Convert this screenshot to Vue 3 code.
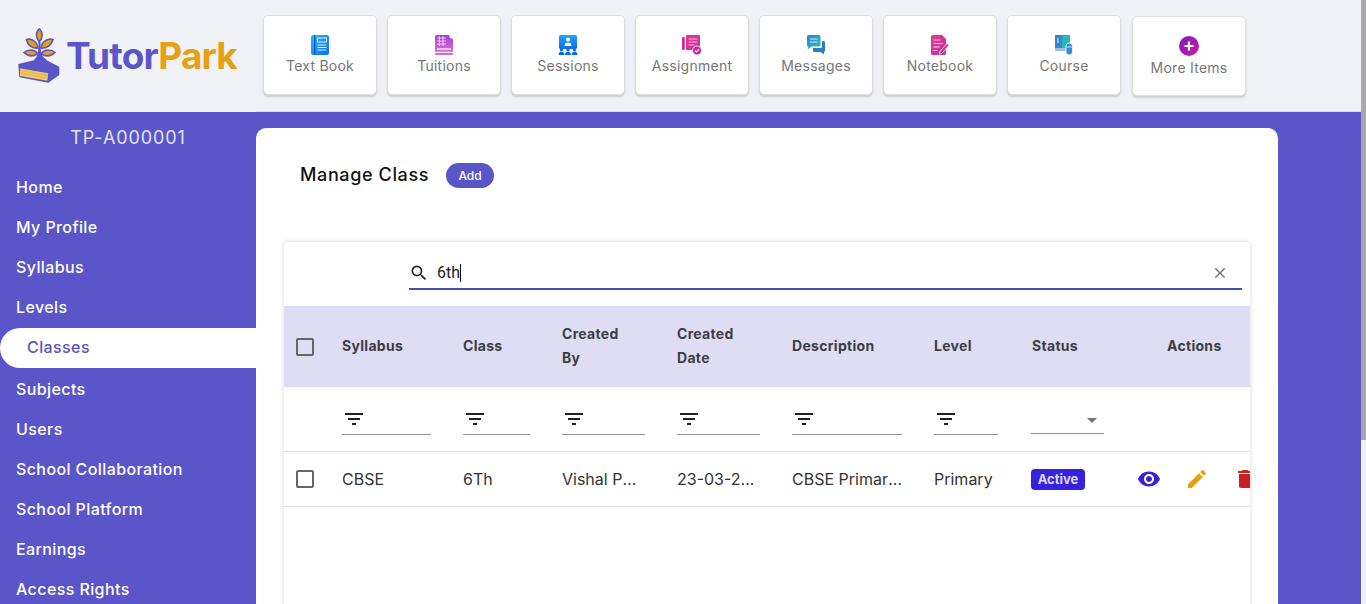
<script setup>
const navCards = [
  { label: 'Text Book', icon: 'book' },
  { label: 'Tuitions', icon: 'tuition' },
  { label: 'Sessions', icon: 'session' },
  { label: 'Assignment', icon: 'assign' },
  { label: 'Messages', icon: 'message' },
  { label: 'Notebook', icon: 'note' },
  { label: 'Course', icon: 'course' },
  { label: 'More Items', icon: 'more' }
];

const menu = ['Home', 'My Profile', 'Syllabus', 'Levels', 'Classes', 'Subjects', 'Users', 'School Collaboration', 'School Platform', 'Earnings', 'Access Rights'];

const columns = [
  { title: 'Syllabus', filter: 89, cell: 89, value: 'CBSE' },
  { title: 'Class', filter: 67, cell: 67, value: '6Th' },
  { title: 'Created By', filter: 83, cell: 83, value: 'Vishal Patel' },
  { title: 'Created Date', filter: 83, cell: 83, value: '23-03-2022' },
  { title: 'Description', filter: 110, cell: 112, value: 'CBSE Primary Class' },
  { title: 'Level', filter: 64, cell: 70, value: 'Primary' }
];
</script>

<template>
  <div class="page">
    <div class="content">
      <header class="topbar">
        <div class="logo">
          <svg class="logo-mark" width="42" height="56" viewBox="0 0 42 56">
            <g fill="#e8a013" stroke="#5a55c9" stroke-width="1.6">
              <path d="M21.3 .8C25 4 25 10 21.3 14 17.5 10 17.5 4 21.3 .8Z" />
              <path d="M8.5 11.5C13 10 19 13 20 20 14 21 9.5 17 8.5 11.5Z" />
              <path d="M35 11.5C30 10 24 13 23 20 29 21 33.5 17 35 11.5Z" />
              <path d="M6 24.5C10 21 16 21 20 25.5 15 29 10 28.5 6 24.5Z" />
              <path d="M37 24.5C33 21 27 21 23 25.5 28 29 33 28.5 37 24.5Z" />
            </g>
            <path fill="#5a55c9" d="M16 32C20 28 20.5 24 20.5 14h2C22.500 24 23 28 29 32Z" />
            <path fill="#5a55c9" d="M.3 36 19 31.500h8L41.300 38.700V47L30.300 54.700 1.300 49.300Z" />
            <path fill="#f0c866" d="M2 40.300 30.300 45.300 29.300 52.700 2 48Z" />
            <path stroke="#d9a63a" stroke-width=".6" d="M2.500 42.500 30 47.500M2.500 45 29.500 50" />
          </svg>
          <span class="logo-text">Tutor<span class="park">Park</span></span>
        </div>
        <nav class="cards">
          <a v-for="c in navCards" :key="c.label" class="card" :class="{ last: c.icon === 'more' }">
            <svg width="20" height="20" viewBox="0 0 20 20" class="card-icon">
              <defs>
                <linearGradient id="gb" x1="0" y1="0" x2="1" y2="1"><stop offset="0" stop-color="#31b5fb" /><stop offset="1" stop-color="#0b6fe8" /></linearGradient>
                <linearGradient id="gp" x1="0" y1="0" x2="0" y2="1"><stop offset="0" stop-color="#a23ccf" /><stop offset="1" stop-color="#dc70d6" /></linearGradient>
                <linearGradient id="gs" x1="0" y1="0" x2="0" y2="1"><stop offset="0" stop-color="#24a4fb" /><stop offset="1" stop-color="#0a6be6" /></linearGradient>
                <linearGradient id="gm" x1="0" y1="0" x2="1" y2="1"><stop offset="0" stop-color="#f0308a" /><stop offset="1" stop-color="#bd3aa8" /></linearGradient>
                <linearGradient id="gc" x1="0" y1="0" x2="1" y2="1"><stop offset="0" stop-color="#2f7fd0" /><stop offset="1" stop-color="#29c0b4" /></linearGradient>
                <linearGradient id="gr" x1="0" y1="0" x2="1" y2="1"><stop offset="0" stop-color="#7d1cb8" /><stop offset="1" stop-color="#c81da0" /></linearGradient>
              </defs>
              <template v-if="c.icon === 'book'">
                <rect x="1" y="0" width="18" height="20" rx="2" fill="url(#gb)" />
                <rect x="4" y="0" width="1.200" height="20" fill="#0c57c4" />
                <rect x="7.500" y="3" width="9" height="4" fill="none" stroke="#d8f0ff" stroke-width="1" />
                <path d="M7.500 10h9M7.500 12.500h9M7.500 15h9" stroke="#d8f0ff" stroke-width="1.200" />
              </template>
              <template v-else-if="c.icon === 'tuition'">
                <path d="M1 2a2 2 0 0 1 2-2h12l1 3 3 1v13H1Z" fill="url(#gp)" />
                <path d="M3 3h9M3 6h9M3 9h9M5.500 1v10M9 1v10" stroke="#f2d4f5" stroke-width=".9" fill="none" />
                <path d="M3 14h14M3 17.500h14" stroke="#f8e4f8" stroke-width="1.300" />
                <rect x="1" y="18" width="18" height="2" rx="1" fill="#d66ad4" />
              </template>
              <template v-else-if="c.icon === 'session'">
                <rect x="1" y="0" width="18" height="14" rx="1.500" fill="url(#gs)" />
                <circle cx="10" cy="4.500" r="2" fill="#fff" />
                <path d="M6.500 11c0-2.500 1.500-3.500 3.500-3.500s3.500 1 3.500 3.500Z" fill="#fff" />
                <g fill="#0a6be6">
                  <circle cx="3.500" cy="15" r="1.600" /><circle cx="10" cy="15" r="1.600" /><circle cx="16.500" cy="15" r="1.600" />
                  <path d="M.5 20c0-2.500 1.200-3 3-3s3 .5 3 3ZM7 20c0-2.500 1.200-3 3-3s3 .5 3 3ZM13.500 20c0-2.500 1.200-3 3-3s3 .5 3 3Z" />
                </g>
              </template>
              <template v-else-if="c.icon === 'assign'">
                <rect x="4" y="0" width="14" height="15" rx="1" fill="url(#gm)" />
                <path d="M6.500 4h9M6.500 7h9M6.500 10h6" stroke="#f9b8d8" stroke-width="1.200" />
                <rect x="0" y="2" width="2.800" height="13" rx="1" fill="#d32c96" />
                <circle cx="15" cy="15.500" r="4.500" fill="#c22a9c" stroke="#fff" stroke-width=".8" />
                <path d="M13 15.500l1.500 1.500 2.500-2.800" stroke="#fff" stroke-width="1.100" fill="none" />
              </template>
              <template v-else-if="c.icon === 'message'">
                <path d="M1 1.500A1.500 1.500 0 0 1 2.500 0H13a1.500 1.500 0 0 1 1.500 1.500V10a1.500 1.500 0 0 1-1.500 1.500H5.500L1.500 14.500 2.500 11.500A1.500 1.500 0 0 1 1 10Z" fill="url(#gc)" />
                <path d="M4 4h7.500M4 7h7.500" stroke="#d5f0f8" stroke-width="1.100" />
                <path d="M16 6h1.500A1.500 1.500 0 0 1 19 7.500v8A1.500 1.500 0 0 1 18 17V19.500L14.500 17H8.500A1.500 1.500 0 0 1 7 15.500V13h7.500A1.500 1.500 0 0 0 16 11.500Z" fill="#2a7cc9" />
              </template>
              <template v-else-if="c.icon === 'note'">
                <path d="M1 1.500A1.500 1.500 0 0 1 2.500 0H12l4 4V18.500A1.500 1.500 0 0 1 14.500 20h-12A1.500 1.500 0 0 1 1 18.500Z" fill="url(#gm)" />
                <path d="M3.500 5h7M3.500 8.500h9M3.500 12h6M3.500 15.500h4" stroke="#fbd0e4" stroke-width="1.200" />
                <path d="M10 16.500 17 8.500l2 1.800-7 8-2.500.7Z" fill="#d32f94" stroke="#fff" stroke-width=".7" />
              </template>
              <template v-else-if="c.icon === 'course'">
                <rect x="1" y="0" width="7" height="15" fill="#3a82cc" />
                <rect x="8" y="0" width="8" height="15" fill="#27b6b0" />
                <rect x="1" y="13" width="12" height="3" fill="#a4bde6" />
                <path d="M4 3v5" stroke="#dff" stroke-width="1" />
                <rect x="12" y="8" width="6.500" height="12" rx="3.200" fill="#2a8fd6" stroke="#fff" stroke-width=".8" />
                <path d="M12.500 12h5.500" stroke="#fff" stroke-width=".7" />
              </template>
              <template v-else>
                <circle cx="10" cy="10" r="10" fill="url(#gr)" />
                <path d="M10 5.500v9M5.500 10h9" stroke="#fff" stroke-width="2.200" />
              </template>
            </svg>
            <span>{{ c.label }}</span>
          </a>
        </nav>
      </header>

      <div class="body">
        <aside class="sidebar">
          <div class="code">TP-A000001</div>
          <ul class="menu">
            <li v-for="m in menu" :key="m" :class="{ active: m === 'Classes' }">{{ m }}</li>
          </ul>
        </aside>

        <main class="main">
          <section class="panel">
            <div class="heading">
              <h1>Manage Class</h1>
              <button class="add">Add</button>
            </div>

            <div class="table-card">
              <div class="search">
                <svg width="20" height="20" viewBox="0 0 24 24"><path fill="#222" d="M15.500 14h-.79l-.28-.27A6.471 6.471 0 0 0 16 9.500 6.500 6.500 0 1 0 9.500 16c1.610 0 3.090-.59 4.230-1.570l.27.28v.79l5 4.990L20.490 19l-4.990-5zm-6 0C7.010 14 5 11.990 5 9.500S7.010 5 9.500 5 14 7.010 14 9.500 11.990 14 9.500 14z" /></svg>
                <span class="query">6th</span>
                <span class="caret"></span>
                <svg class="clear" width="18" height="18" viewBox="0 0 24 24"><path fill="#757575" d="M19 6.410L17.590 5 12 10.590 6.410 5 5 6.410 10.590 12 5 17.590 6.410 19 12 13.410 17.590 19 19 17.590 13.410 12z" /></svg>
              </div>

              <div class="grid head">
                <div class="check-cell"><span class="checkbox"></span></div>
                <div v-for="col in columns" :key="col.title" class="title">{{ col.title }}</div>
                <div class="title">Status</div>
                <div class="title actions-title">Actions</div>
              </div>

              <div class="grid filters">
                <div></div>
                <div v-for="col in columns" :key="col.title">
                  <div class="filter" :style="{ width: col.filter + 'px' }">
                    <svg width="24" height="24" viewBox="0 0 24 24"><path fill="#222" d="M10 18h4v-2h-4v2zM3 6v2h18V6H3zm3 7h12v-2H6v2z" /></svg>
                  </div>
                </div>
                <div>
                  <div class="filter select"><span class="arrow"></span></div>
                </div>
                <div></div>
              </div>

              <div class="grid row">
                <div class="check-cell"><span class="checkbox"></span></div>
                <div v-for="col in columns" :key="col.title" class="cell" :style="{ maxWidth: col.cell + 'px' }">{{ col.value }}</div>
                <div><span class="badge">Active</span></div>
                <div class="actions">
                  <svg width="24" height="24" viewBox="0 0 24 24"><path fill="#3621dc" d="M12 4.500C7 4.500 2.730 7.610 1 12c1.730 4.390 6 7.500 11 7.500s9.270-3.110 11-7.500c-1.730-4.390-6-7.500-11-7.500zM12 17c-2.760 0-5-2.240-5-5s2.240-5 5-5 5 2.240 5 5-2.240 5-5 5zm0-8c-1.660 0-3 1.340-3 3s1.340 3 3 3 3-1.340 3-3-1.340-3-3-3z" /></svg>
                  <svg width="24" height="24" viewBox="0 0 24 24"><path fill="#e8a013" d="M3 17.250V21h3.750L17.810 9.940l-3.750-3.750L3 17.250zM20.710 7.040c.39-.39.39-1.020 0-1.410l-2.340-2.340c-.39-.39-1.020-.39-1.410 0l-1.830 1.830 3.750 3.750 1.830-1.830z" /></svg>
                  <svg width="24" height="24" viewBox="0 0 24 24"><path fill="#c62020" d="M6 19c0 1.100.9 2 2 2h8c1.100 0 2-.9 2-2V7H6v12zM19 4h-3.500l-1-1h-5l-1 1H5v2h14V4z" /></svg>
                </div>
              </div>
            </div>
          </section>
        </main>
      </div>
    </div>
    <div class="scrollbar"><div class="thumb"></div></div>
  </div>
</template>

<style>
html, body {
  margin: 0;
  overflow: hidden;
}
</style>

<style scoped>
.page {
  display: flex;
  height: 100vh;
  overflow: hidden;
  font-family: Inter, "Open Sans", sans-serif;
}
.content {
  flex: 1;
  min-width: 0;
  display: flex;
  flex-direction: column;
}
.scrollbar {
  width: 5px;
  background: #f1f1f1;
}
.thumb {
  height: 440px;
  background: #a8a8a8;
}
.topbar {
  display: flex;
  height: 112px;
  flex: none;
  background: #f1f2f7;
}
.logo {
  width: 256px;
  flex: none;
  display: flex;
  align-items: flex-start;
  padding: 28px 0 0 18px;
  box-sizing: border-box;
}
.logo-text {
  margin: 5px 0 0 6px;
  font-size: 37px;
  line-height: 46px;
  font-weight: 700;
  letter-spacing: -.85px;
  color: #5a55c9;
}
.park {
  color: #e8a013;
}
.cards {
  flex: 1;
  display: flex;
  gap: 10px;
  padding: 15px 0 0 7px;
  border-bottom: 1px solid #dcdde3;
  box-sizing: border-box;
}
.card {
  width: 114px;
  height: 80px;
  box-sizing: border-box;
  display: flex;
  flex-direction: column;
  align-items: center;
  padding-top: 19px;
  background: #fff;
  border: 1px solid #dedee2;
  border-radius: 5px;
  box-shadow: 0 2px 2px #cfcfcf;
  color: #777;
  font-size: 14px;
  line-height: 21px;
  letter-spacing: .25px;
}
.card.last {
  margin: 1px 0 0 1px;
}
.card.last span {
  margin-top: 1px;
}
.card-icon {
  flex: none;
}
.body {
  flex: 1;
  display: flex;
  min-height: 0;
  background: #5a55c9;
}
.sidebar {
  width: 256px;
  flex: none;
  color: #fff;
}
.code {
  text-align: center;
  font-size: 18px;
  line-height: 27px;
  margin-top: 12px;
  color: #e3e2f7;
  letter-spacing: .9px;
}
.menu {
  list-style: none;
  margin: 16px 0 0;
  padding: 0;
  font-size: 16px;
  font-weight: 500;
  letter-spacing: .4px;
}
.menu li {
  height: 40px;
  line-height: 40px;
  padding-left: 16px;
}
.menu li.active {
  margin: 1px 0;
  line-height: 38px;
  padding-left: 27px;
  background: #fff;
  color: #5a55c9;
  border-radius: 20px 0 0 20px;
}
.main {
  flex: 1;
  min-width: 0;
  padding: 16px 83px 0 0;
}
.panel {
  height: 100%;
  box-sizing: border-box;
  background: #fff;
  border-radius: 10px 10px 0 0;
  padding: 35px 28px 0;
}
.heading {
  display: flex;
  align-items: center;
  gap: 17px;
  height: 25px;
  padding-left: 16px;
}
h1 {
  margin: 0 0 2px;
  font-size: 18px;
  font-weight: 500;
  letter-spacing: .62px;
  color: #111;
}
.add {
  width: 48px;
  height: 25px;
  border: 0;
  border-radius: 13px;
  background: #5a55c9;
  color: #fff;
  font: 500 12px Inter, sans-serif;
}
.table-card {
  margin-top: 54px;
  height: 400px;
  overflow: hidden;
  border-radius: 4px 4px 0 0;
  background: #fff;
  box-shadow: 0 0 5px rgba(0, 0, 0, .16);
}
.search {
  display: flex;
  align-items: center;
  height: 31px;
  margin: 13px 8px 16px 125px;
  padding-top: 2px;
  border-bottom: 2px solid #3f51b5;
  font-family: Roboto, sans-serif;
  font-size: 16px;
  color: #222;
}
.query {
  margin-left: 8px;
}
.caret {
  width: 1px;
  height: 18px;
  background: #111;
}
.clear {
  margin-left: auto;
  margin-right: 13px;
}
.grid {
  display: grid;
  grid-template-columns: 58px 121px 99px 115px 115px 142px 98px 98px 1fr;
  align-items: center;
}
.head {
  height: 81px;
  background: #dfddf3;
  font-size: 14px;
  font-weight: 700;
  letter-spacing: .3px;
  line-height: 24px;
  color: #3d3d45;
}
.title {
  width: min-content;
  margin-bottom: 2px;
}
.actions-title {
  padding-left: 37px;
}
.check-cell {
  padding-left: 12px;
}
.checkbox {
  display: block;
  width: 18px;
  height: 18px;
  box-sizing: border-box;
  border: 2px solid #666;
  border-radius: 2px;
}
.filters {
  height: 64px;
  align-items: start;
  border-bottom: 1px solid #e0e0e0;
}
.filter {
  height: 27px;
  margin-top: 20px;
  border-bottom: 1px solid #949494;
  line-height: 0;
}
.select {
  width: 73px;
  margin-left: -1px;
  display: flex;
  justify-content: flex-end;
  align-items: center;
  padding-right: 7px;
  box-sizing: border-box;
}
.arrow {
  width: 0;
  height: 0;
  border: 5px solid transparent;
  border-top-color: #757575;
  border-bottom: 0;
}
.row {
  height: 54px;
  border-bottom: 1px solid #e0e0e0;
  font-size: 16px;
  color: #333;
}
.cell {
  white-space: nowrap;
  overflow: hidden;
  text-overflow: ellipsis;
}
.badge {
  display: block;
  width: 54px;
  height: 21px;
  margin-left: -1px;
  line-height: 20px;
  text-align: center;
  border-radius: 4px;
  background: #3621dc;
  color: #dcd9ff;
  font-size: 13px;
  font-weight: 700;
}
.actions {
  display: flex;
  gap: 24px;
  padding-left: 7px;
}
.actions svg {
  flex: none;
}
</style>
